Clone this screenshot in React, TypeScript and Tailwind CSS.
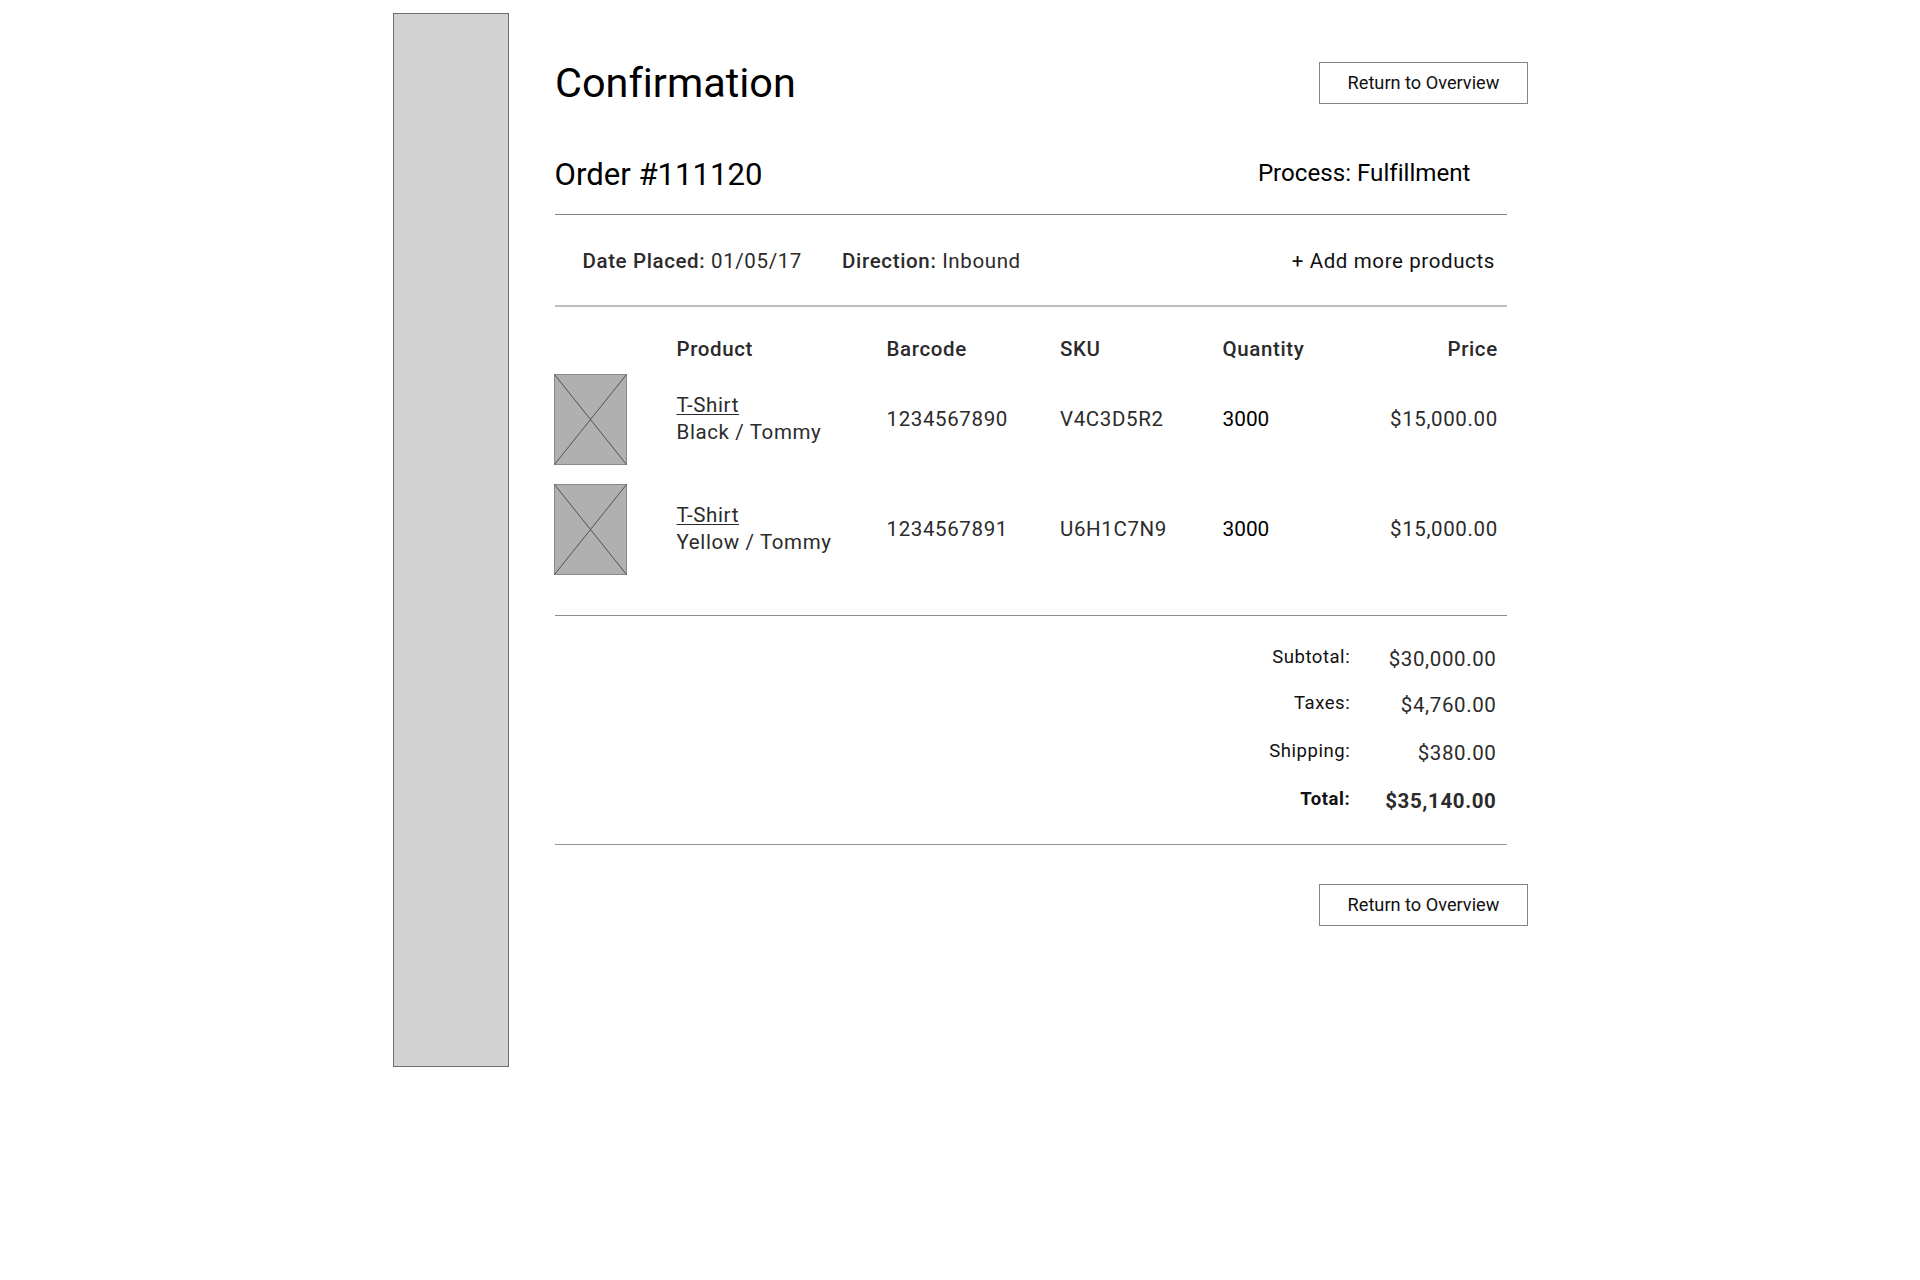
const products = [
  { name: "T-Shirt", variant: "Black / Tommy", barcode: "1234567890", sku: "V4C3D5R2", quantity: "3000", price: "$15,000.00" },
  { name: "T-Shirt", variant: "Yellow / Tommy", barcode: "1234567891", sku: "U6H1C7N9", quantity: "3000", price: "$15,000.00" },
];

const columns = "grid grid-cols-[122px_210px_173.5px_162.5px_275.3px]";

function ReturnButton() {
  return (
    <button className="h-[42px] w-[209px] shrink-0 border border-[#858585] bg-white text-center text-[18.18px] leading-[40px] text-[#111]">
      Return to Overview
    </button>
  );
}

function Thumbnail() {
  return (
    <svg className="ml-[-0.5px] h-[91px] w-[73px]" viewBox="0 0 73 91" fill="none">
      <rect x="0.5" y="0.5" width="72" height="90" fill="#b0b0b0" stroke="#8a8a8a" />
      <path d="M0.5 0.5 72.5 90.5M72.5 0.5 0.5 90.5" stroke="#4c4c4c" strokeWidth="0.95" />
    </svg>
  );
}

function TotalRow({ label, amount, className }: { label: string; amount: string; className: string }) {
  return (
    <div className={`flex items-start justify-end ${className}`}>
      <span className="mt-px text-[18.5px] leading-[21px] tracking-[0.55px] text-[#111]">{label}</span>
      <span className="mt-px w-[146.3px] text-right">{amount}</span>
    </div>
  );
}

export default function App() {
  return (
    <div className="flex h-[1280px] w-[1920px] items-start overflow-hidden bg-white pl-[393px] font-['Roboto',sans-serif] text-[20.5px] leading-6 tracking-[0.62px] text-[#2b2b2b] [font-variant-ligatures:none]">
      <aside className="mt-[13px] h-[1054px] w-[116px] shrink-0 border border-[#6f6f6f] bg-[#d2d2d2]" />

      <main className="ml-[45.5px] w-[973.5px] pt-[58px] text-left">
        <header className="flex items-start justify-between tracking-normal">
          <h1 className="pl-[0.5px] text-[41.4px] leading-[51px] text-black">Confirmation</h1>
          <div className="mt-1">
            <ReturnButton />
          </div>
        </header>

        <section className="ml-[0.5px] w-[951.5px]">
          <div className="mt-[47px] flex h-[59px] items-start justify-between border-b border-[#858585] tracking-normal text-black">
            <h2 className="-ml-[0.5px] text-[31.1px] leading-[37px]">Order #111120</h2>
            <span className="mr-[36px] mt-0.5 text-[24.15px] leading-[31px]">Process: Fulfillment</span>
          </div>

          <div className="flex h-[92px] items-start border-b-2 border-[#bebebe] pl-[27.5px] pr-[11.5px] pt-[34px]">
            <span className="w-[259.5px]">
              <b className="font-medium">Date Placed:</b> 01/05/17
            </span>
            <span>
              <b className="font-medium tracking-[0.66px]">Direction:</b> Inbound
            </span>
            <span className="ml-auto text-[#111]">+ Add more products</span>
          </div>

          <div className="h-[309px] border-b border-[#8c8c8c] pt-[30px]">
            <div className="-ml-[0.5px]">
              <div className={`${columns} font-medium`}>
                <span />
                <span>Product</span>
                <span>Barcode</span>
                <span>SKU</span>
                <span className="flex justify-between">
                  Quantity <span>Price</span>
                </span>
              </div>
              <div className="mt-[13px] flex flex-col gap-[19px]">
                {products.map((p) => (
                  <div key={p.barcode} className={`${columns} h-[91px] items-center`}>
                    <Thumbnail />
                    <span className="flex flex-col gap-[3px] pb-0.5">
                      <a className="leading-6 underline decoration-1 underline-offset-2">{p.name}</a>
                      <span>{p.variant}</span>
                    </span>
                    <span className="pb-px">{p.barcode}</span>
                    <span className="pb-px">{p.sku}</span>
                    <span className="flex justify-between pb-px">
                      <span className="text-[20.8px] tracking-normal text-black">{p.quantity}</span>
                      <span>{p.price}</span>
                    </span>
                  </div>
                ))}
              </div>
            </div>
          </div>

          <div className="h-[229px] border-b border-[#959595] pr-[10px] pt-[30px]">
            <TotalRow label="Subtotal:" amount="$30,000.00" className="h-[46px]" />
            <TotalRow label="Taxes:" amount="$4,760.00" className="h-12" />
            <TotalRow label="Shipping:" amount="$380.00" className="h-12" />
            <TotalRow label="Total:" amount="$35,140.00" className="font-bold" />
          </div>
        </section>

        <div className="mt-[39px] flex justify-end tracking-normal">
          <ReturnButton />
        </div>
      </main>
    </div>
  );
}
